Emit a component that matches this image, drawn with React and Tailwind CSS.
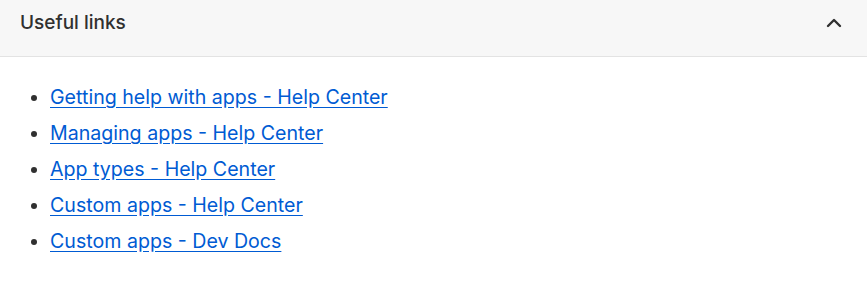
import React from 'react';
import { ChevronUp } from 'lucide-react';

const links = [
    'Getting help with apps - Help Center',
    'Managing apps - Help Center',
    'App types - Help Center',
    'Custom apps - Help Center',
    'Custom apps - Dev Docs',
];

const App = () => {
    return (
        <div className="w-[867px] h-[284px] bg-white overflow-hidden" style={{ fontFamily: 'Inter, "Noto Sans", sans-serif' }}>
            <div className="h-[57px] flex items-start justify-between pt-[10px] pl-5 pr-[21px] bg-[#f7f7f7] border-b border-[#e3e3e3]">
                <h2 className="text-[19px] font-[550] text-[#303030] leading-[26px]">Useful links</h2>
                <ChevronUp className="h-[24px] w-[24px] mt-[1px] text-[#303030]" strokeWidth={2.4} />
            </div>
            <ul className="list-disc pl-[50px] pt-[28px] space-y-[12px] marker:text-[#303030]">
                {links.map((l) => (
                    <li key={l} className="text-[19.6px] leading-6">
                        <a href="#" className="text-[#005bd3] underline underline-offset-[3px]">{l}</a>
                    </li>
                ))}
            </ul>
        </div>
    );
};

export default App;
